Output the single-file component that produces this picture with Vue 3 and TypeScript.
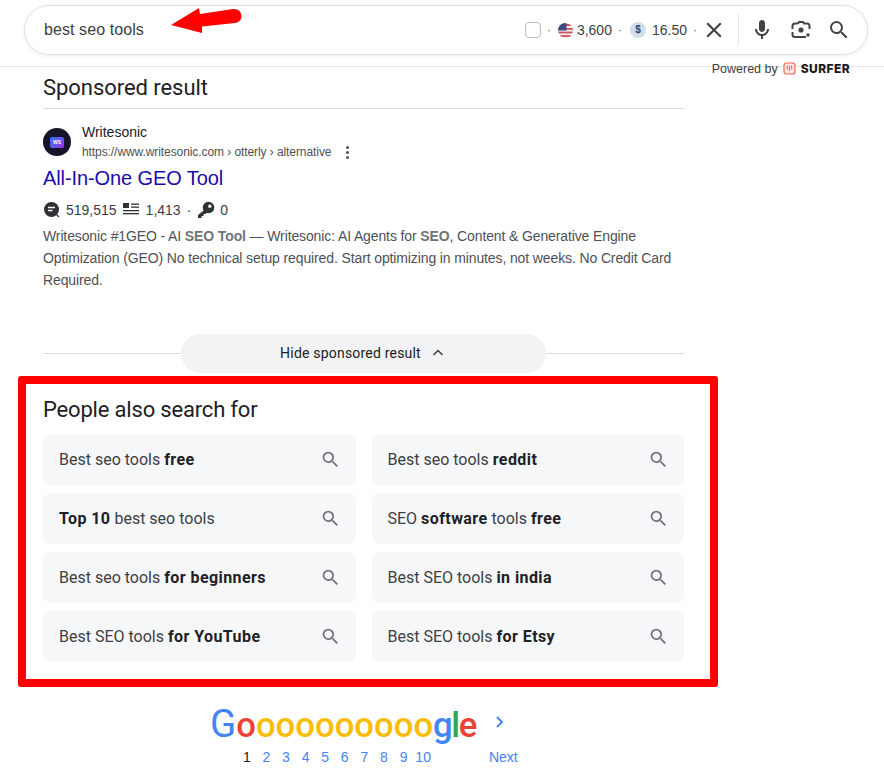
<script setup lang="ts">
const chips: { parts: [string, boolean][] }[] = [
  { parts: [['Best seo tools ', false], ['free', true]] },
  { parts: [['Best seo tools ', false], ['reddit', true]] },
  { parts: [['Top 10', true], [' best seo tools', false]] },
  { parts: [['SEO ', false], ['software', true], [' tools ', false], ['free', true]] },
  { parts: [['Best seo tools ', false], ['for beginners', true]] },
  { parts: [['Best SEO tools ', false], ['in india', true]] },
  { parts: [['Best SEO tools ', false], ['for YouTube', true]] },
  { parts: [['Best SEO tools ', false], ['for Etsy', true]] },
]
const pages = [2, 3, 4, 5, 6, 7, 8, 9, 10]
const yellowOs = Array.from({ length: 9 }, (_, i) => i)
const searchPath = 'M15.5 14h-.79l-.28-.27A6.471 6.471 0 0 0 16 9.5 6.5 6.5 0 1 0 9.5 16c1.61 0 3.09-.59 4.23-1.57l.27.28v.79l5 4.99L20.49 19l-4.99-5zm-6 0C7.01 14 5 11.99 5 9.5S7.01 5 9.5 5 14 7.01 14 9.5 11.99 14 9.5 14z'
</script>

<template>
  <div class="page">
    <header class="header">
      <div class="searchbox">
        <span class="query">best seo tools</span>
        <svg class="arrow" width="76" height="30" viewBox="0 0 76 30">
          <path d="M1 18 L29 1 L30 7 L63 2 C68 1.500 71.500 5 71.500 9 C71.500 13 69 15.500 65 16 L32 19.500 L32 26 Z" fill="#f00" />
        </svg>
        <div class="tools">
          <span class="check"></span>
          <span class="dot dot-first">·</span>
          <svg class="flag" width="15" height="15" viewBox="0 0 15 15">
            <defs><clipPath id="fc"><circle cx="7.5" cy="7.5" r="7.5" /></clipPath></defs>
            <g clip-path="url(#fc)">
              <rect width="15" height="15" fill="#eee" />
              <rect y="1" width="15" height="2" fill="#d5505c" />
              <rect y="5" width="15" height="1.8" fill="#d5505c" />
              <rect y="8.6" width="15" height="1.8" fill="#d5505c" />
              <rect y="12.2" width="15" height="1.8" fill="#d5505c" />
              <rect width="8.5" height="7.5" fill="#3c4a86" />
            </g>
          </svg>
          <span class="num">3,600</span>
          <span class="dot dot-mid">·</span>
          <span class="dollar">$</span>
          <span class="num price">16.50</span>
          <span class="dot dot-last">·</span>
          <svg class="x" width="24" height="24" viewBox="0 0 24 24">
            <path d="M19 6.41 17.59 5 12 10.59 6.41 5 5 6.41 10.59 12 5 17.59 6.41 19 12 13.41 17.59 19 19 17.59 13.41 12z" fill="#444" transform="translate(12 12) scale(1.08) translate(-12 -12)" />
          </svg>
          <span class="sep"></span>
          <svg class="tool mic" width="24" height="24" viewBox="0 0 24 24" fill="#444">
            <path d="M12 14c1.66 0 3-1.34 3-3V5c0-1.66-1.34-3-3-3S9 3.34 9 5v6c0 1.66 1.34 3 3 3z" />
            <path d="M17 11c0 2.76-2.24 5-5 5s-5-2.24-5-5H5c0 3.53 2.61 6.43 6 6.92V21h2v-3.08c3.39-.49 6-3.39 6-6.92h-2z" />
          </svg>
          <svg class="tool lens" width="24" height="24" viewBox="0 0 24 24" fill="none" stroke="#444" stroke-width="2">
            <path d="M9 5.500 10 4h4l1 1.500h3A2.500 2.500 0 0 1 20.500 8v3M3.500 11V8A2.500 2.500 0 0 1 6 5.500h3M3.500 14v2.500A2.500 2.500 0 0 0 6 19h11" />
            <circle cx="12" cy="12" r="2.600" fill="#444" stroke="none" />
            <circle cx="19" cy="17" r="1.700" fill="#444" stroke="none" />
          </svg>
          <svg class="tool" width="24" height="24" viewBox="0 0 24 24"><path :d="searchPath" fill="#444" /></svg>
        </div>
      </div>
      <div class="powered">
        <span>Powered by</span>
        <svg width="13" height="13" viewBox="0 0 13 13" fill="none">
          <rect x="1" y="1" width="11" height="11" rx="2.500" fill="#ffe9e5" stroke="#f4624c" stroke-width="1.200" />
          <path d="M4.300 3.500v4M6.500 3.500v5.500M8.700 3.500v4" stroke="#f4624c" stroke-width="1.100" />
        </svg>
        <b>SURFER</b>
      </div>
    </header>

    <main class="main">
      <section class="sponsored">
        <h2 class="title-sponsored">Sponsored result</h2>
        <div class="site">
          <span class="favicon"><span class="ws">WS</span></span>
          <div class="site-text">
            <div class="site-name">Writesonic</div>
            <div class="site-url">
              <span>https://www.writesonic.com › otterly › alternative</span>
              <span class="kebab"><i></i><i></i><i></i></span>
            </div>
          </div>
        </div>
        <a class="result-link">All-In-One GEO Tool</a>
        <div class="stats">
          <svg width="18" height="18" viewBox="0 0 18 18">
            <circle cx="8.500" cy="8.500" r="7.500" fill="#303134" />
            <path d="M5 6.500h7M5 9.500h4.500" stroke="#fff" stroke-width="1.500" />
            <path d="M13 13l3 3" stroke="#303134" stroke-width="1.300" />
          </svg>
          <span class="stat-a">519,515</span>
          <svg class="stat-lines" width="17" height="14" viewBox="0 0 17 14" fill="#303134">
            <rect x="0" y="0" width="6" height="5" />
            <rect x="8" y="0.500" width="8" height="1.300" />
            <rect x="8" y="3.500" width="8" height="1.300" />
            <rect x="0" y="7" width="16" height="1.300" />
            <rect x="0" y="10" width="16" height="1.300" />
          </svg>
          <span class="stat-b">1,413</span>
          <span class="stat-dot">·</span>
          <svg class="stat-key" width="18" height="18" viewBox="0 0 18 18" fill="#303134">
            <circle cx="11.500" cy="6.500" r="5.800" />
            <path d="M8 8.500 1 14v3h3.500v-2h2v-2h2l2.500-2.500z" />
            <circle cx="12.800" cy="5.200" r="1.700" fill="#fff" />
          </svg>
          <span class="stat-c">0</span>
        </div>
        <p class="snippet">Writesonic #1GEO - AI <b>SEO Tool</b> — Writesonic: AI Agents for <b>SEO</b>, Content &amp; Generative Engine Optimization (GEO) No technical setup required. Start optimizing in minutes, not weeks. No Credit Card Required.</p>
        <div class="hide-row">
          <div class="hide-pill">
            <span>Hide sponsored result</span>
            <svg width="18" height="18" viewBox="0 0 18 18" fill="none">
              <path d="M4.500 11 9 6.500l4.500 4.500" stroke="#3c4043" stroke-width="1.500" />
            </svg>
          </div>
        </div>
      </section>
    </main>

    <section class="related">
      <h2 class="related-title">People also search for</h2>
      <div class="chip-grid">
        <div v-for="(chip, i) in chips" :key="i" class="chip">
          <span class="chip-text"><template v-for="(p, j) in chip.parts" :key="j"><b v-if="p[1]">{{ p[0] }}</b><template v-else>{{ p[0] }}</template></template></span>
          <svg width="21" height="21" viewBox="0 0 24 24"><path :d="searchPath" fill="#70757a" /></svg>
        </div>
      </div>
    </section>

    <nav class="pager">
      <div class="logo-row">
        <div class="logo">
          <span class="g-blue big">G</span><span class="g-red">o</span><span v-for="n in yellowOs" :key="n" class="g-yellow">o</span><span class="g-blue">g</span><span class="g-green ell">l</span><span class="g-red">e</span>
        </div>
        <svg class="chev" width="12" height="14" viewBox="0 0 12 14" fill="none">
          <path d="M3 2l5 5-5 5" stroke="#4285f4" stroke-width="2" />
        </svg>
      </div>
      <div class="nums">
        <span class="cur">1</span>
        <a v-for="p in pages" :key="p" class="pg">{{ p }}</a>
        <a class="next">Next</a>
      </div>
    </nav>
  </div>
</template>

<style scoped>
.page {
  width: 884px;
  height: 776px;
  overflow: hidden;
  background: #fff;
  font-family: "Liberation Sans", Arial, sans-serif;
  color: #202124;
}
.header {
  position: relative;
  height: 61px;
  border-bottom: 1px solid #e4e4e4;
  padding: 5px 16px 0 24px;
  width: 844px;
}
.searchbox {
  position: relative;
  height: 50px;
  box-sizing: border-box;
  border: 1px solid #dfe1e5;
  border-radius: 25px;
  background: #fff;
  box-shadow: 0 1px 4px rgba(32, 33, 36, 0.08);
  display: flex;
  align-items: center;
  padding-left: 19px;
}
.query {
  font-size: 16px;
  letter-spacing: 0.08px;
  color: #3c4043;
}
.arrow {
  position: absolute;
  left: 145px;
  top: 1px;
}
.tools {
  margin-left: auto;
  display: flex;
  align-items: center;
  padding-right: 16px;
  font-size: 14px;
  color: #3c4043;
}
.check {
  width: 14px;
  height: 14px;
  border: 1.5px solid #b9bdc6;
  border-radius: 4px;
  background: #fff;
}
.dot {
  margin: 0 5px;
  font-size: 12px;
  color: #555;
}
.dot-first {
  margin: 0 6px;
}
.dot-mid {
  margin: 0 6px;
}
.dot-last {
  margin: 0 5px 0 6px;
}
.flag {
  margin: 0 4px 0 1px;
}
.dollar {
  width: 16px;
  height: 16px;
  border-radius: 50%;
  background: #d4dce8;
  color: #33415e;
  font-size: 10px;
  font-weight: 700;
  text-align: center;
  line-height: 16px;
  margin-left: 2px;
}
.price {
  margin-left: 6px;
}
.sep {
  width: 1px;
  height: 32px;
  background: #e4e6e8;
  margin: 0 11px 0 12px;
}
.tool {
  margin-right: 15px;
}
.lens {
  margin-right: 14px;
}
.tool:last-child {
  margin-right: 0;
}
.powered {
  position: absolute;
  right: 34px;
  top: 61px;
  display: flex;
  align-items: center;
  gap: 5px;
  font-size: 12.5px;
  color: #3c4043;
}
.powered b {
  font-family: Inter, sans-serif;
  font-size: 12px;
  color: #1c1c1c;
  font-weight: 800;
  letter-spacing: 0.4px;
}
.main {
  margin-left: 43px;
  width: 641px;
}
.title-sponsored {
  margin: 0;
  padding-top: 7px;
  height: 42px;
  box-sizing: border-box;
  font: 400 22px/28px Roboto, sans-serif;
  letter-spacing: -0.05px;
  color: #202124;
  border-bottom: 1px solid #dadce0;
}
.site {
  display: flex;
  gap: 11px;
  align-items: center;
  margin-top: 14px;
  height: 38px;
}
.favicon {
  width: 28px;
  height: 28px;
  border-radius: 50%;
  background: #141528;
  display: flex;
  align-items: center;
  justify-content: center;
}
.ws {
  width: 14px;
  height: 11px;
  border-radius: 2px;
  background: linear-gradient(135deg, #2d7cf5, #a12cf0);
  color: #fff;
  font: 700 5px/11px "Liberation Sans", sans-serif;
  text-align: center;
}
.site-name {
  font-size: 14px;
  line-height: 20px;
  color: #202124;
}
.site-url {
  display: flex;
  align-items: center;
  font-size: 12px;
  line-height: 20px;
  letter-spacing: -0.08px;
  color: #4d5156;
}
.kebab {
  display: flex;
  flex-direction: column;
  gap: 2px;
  margin-left: 15px;
}
.kebab i {
  width: 3px;
  height: 3px;
  border-radius: 50%;
  background: #4d5156;
}
.result-link {
  display: block;
  margin-top: 4px;
  font: 400 20px/26px "Liberation Sans", sans-serif;
  letter-spacing: -0.1px;
  color: #1a0dab;
}
.stats {
  display: flex;
  align-items: center;
  height: 20px;
  margin-top: 9px;
  font-size: 14px;
  color: #3c4043;
}
.stat-a {
  margin-left: 5px;
}
.stat-lines {
  margin-left: 6px;
}
.stat-b {
  margin-left: 6px;
}
.stat-dot {
  margin: 0 6px;
}
.stat-c {
  margin-left: 5px;
}
.snippet {
  margin: 5px 0 0;
  font-size: 14px;
  line-height: 22px;
  letter-spacing: -0.12px;
  color: #4d5156;
}
.snippet b {
  color: #70757a;
}
.hide-row {
  margin-top: 43px;
  height: 39px;
  display: flex;
  align-items: center;
  justify-content: center;
  background: linear-gradient(#dadce0, #dadce0) center / 100% 1px no-repeat;
}
.hide-pill {
  box-sizing: border-box;
  width: 365px;
  height: 39px;
  padding-bottom: 2px;
  border-radius: 20px;
  background: #f1f3f4;
  display: flex;
  align-items: center;
  justify-content: center;
  gap: 8px;
  font: 400 14px Roboto, sans-serif;
  letter-spacing: 0.2px;
  color: #202124;
}
.related {
  box-sizing: border-box;
  margin: 3px 0 0 18px;
  width: 700px;
  height: 311px;
  border: 8px solid #f00;
  border-radius: 3px;
  padding: 0 26px 0 17px;
}
.related-title {
  margin: 0;
  padding-top: 12px;
  font: 400 22px/28px Roboto, sans-serif;
  letter-spacing: -0.18px;
  color: #202124;
}
.chip-grid {
  margin-top: 10px;
  display: grid;
  grid-template-columns: 312.5px 312.5px;
  column-gap: 16px;
  row-gap: 8px;
  grid-auto-rows: 51px;
}
.chip {
  display: flex;
  align-items: center;
  justify-content: space-between;
  padding: 0 15px 0 16px;
  border-radius: 8px;
  background: #f6f7f9;
  font: 400 16px Roboto, sans-serif;
  color: #3c4043;
}
.chip b {
  font-weight: 700;
  letter-spacing: 0.42px;
  color: #202124;
}
.pager {
  margin-left: 210px;
}
.logo-row {
  display: flex;
  align-items: center;
  height: 47px;
  margin-top: 14px;
}
.logo {
  font: 500 34.7px/48px Roboto, sans-serif;
  white-space: nowrap;
  display: flex;
  align-items: baseline;
}
.big {
  font-size: 38.5px;
  font-weight: 400;
}
.ell {
  margin: 0 -1.5px;
}
.chev {
  margin-left: 17px;
  margin-top: -6px;
}
.g-blue { color: #4285f4; }
.g-red { color: #ea4335; }
.g-yellow { color: #fbbc05; }
.g-green { color: #34a853; }
.nums {
  display: flex;
  align-items: center;
  font-size: 14px;
  line-height: 18px;
  padding-left: 27px;
}
.cur, .pg {
  width: 19.6px;
  text-align: center;
  color: #4285f4;
}
.cur {
  color: #202124;
}
.next {
  margin-left: 56px;
  color: #4285f4;
}
</style>

<style>
html, body {
  margin: 0;
  overflow: hidden;
  background: #fff;
}
</style>
